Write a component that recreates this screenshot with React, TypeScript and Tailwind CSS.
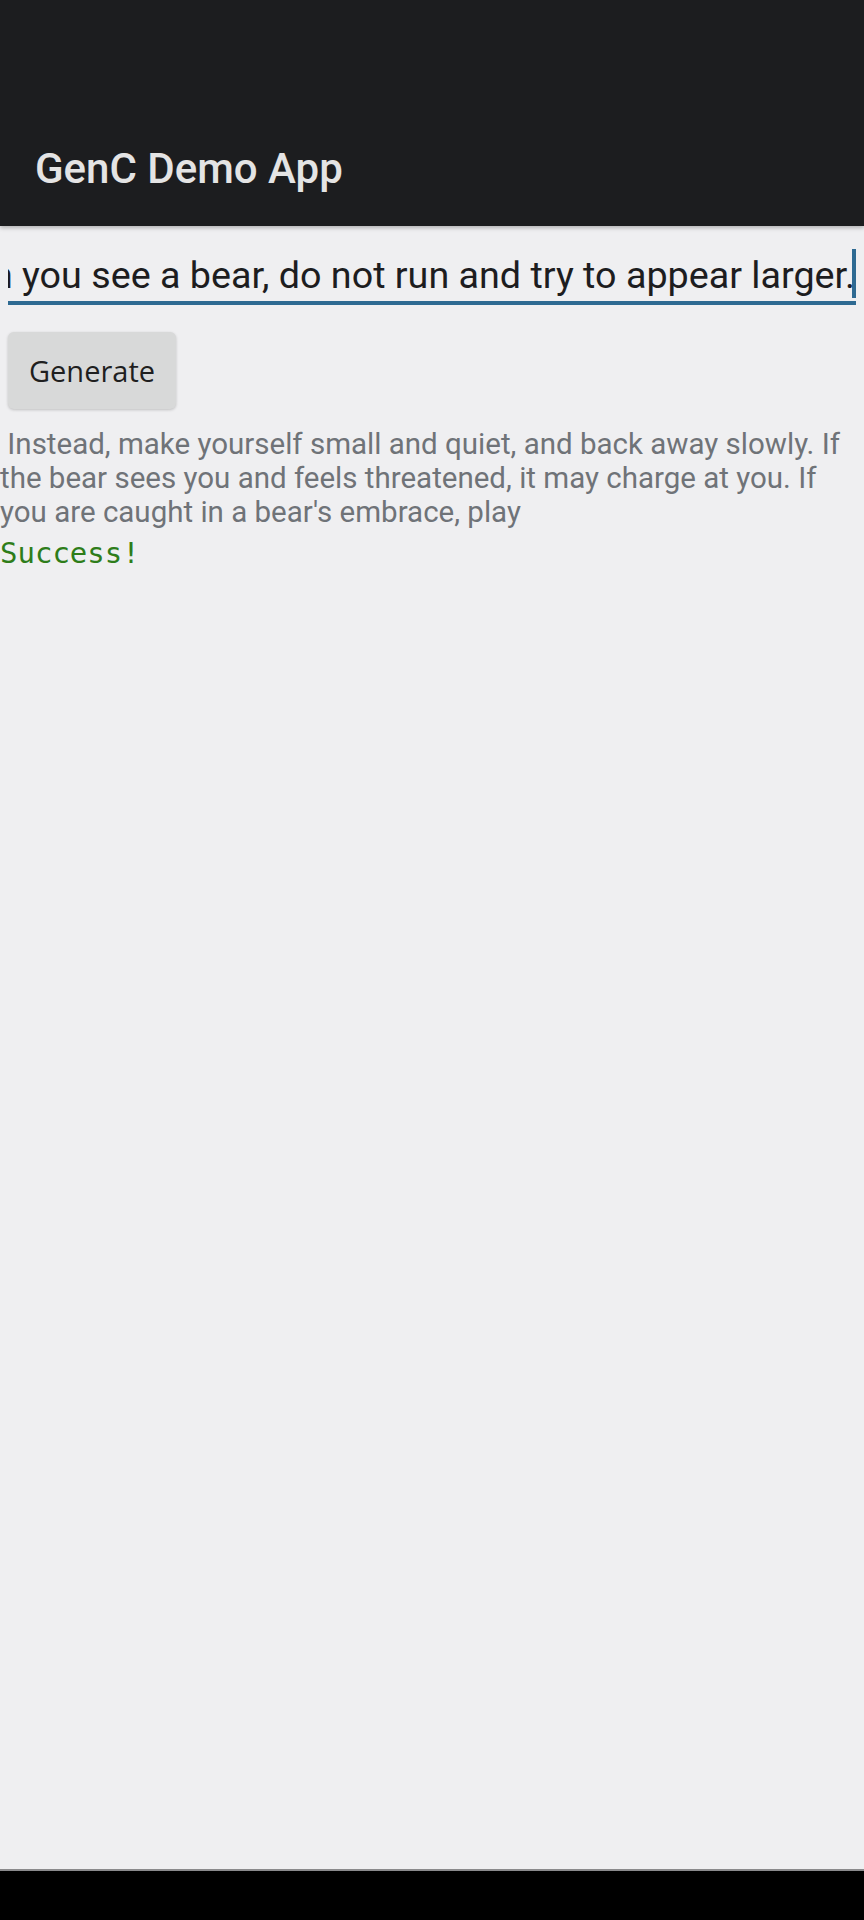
export default function App() {
  const prompt = "When you see a bear, do not run and try to appear larger.";
  const lines = [
    " Instead, make yourself small and quiet, and back away slowly. If",
    "the bear sees you and feels threatened, it may charge at you. If",
    "you are caught in a bear's embrace, play",
  ];

  return (
    <div className="flex h-[1920px] w-[864px] flex-col bg-[#efeff1] font-['Roboto',sans-serif]">
      <header className="flex h-[226px] shrink-0 items-end bg-[#1c1d1f] px-[35px] pb-[32px] shadow-[0_2px_4px_rgba(0,0,0,0.25)]">
        <h1 className="text-[42px] font-medium leading-[50px] text-[#e4e4e4]">GenC Demo App</h1>
      </header>

      <main className="flex flex-1 flex-col">
        <div className="mx-2 mt-[20px] flex h-[59px] items-end overflow-hidden border-b-4 border-[#2e6a92]">
          <div className="flex w-full justify-end whitespace-nowrap">
            <span className="text-[37.7px] leading-[52px] text-[#1d1d1f]">{prompt}</span>
            <span className="mb-[3px] -ml-[3px] w-[4px] shrink-0 self-stretch bg-[#2e6a92]" />
          </div>
        </div>

        <div className="mt-[27px] px-2">
          <button className="h-[77px] w-[168px] rounded-[6px] bg-[#d8d9d9] font-['Open_Sans',sans-serif] text-[29px] text-[#1f1f1f] shadow-[0_1px_3px_rgba(0,0,0,0.2)]">
            Generate
          </button>
        </div>

        <p className="mt-[18px] text-[29.5px] leading-[34px] text-[#6f7378]">
          {lines.map((line) => (
            <span key={line} className="block whitespace-pre">
              {line}
            </span>
          ))}
        </p>
        <p className="mt-[6px] font-['DejaVu_Sans_Mono',monospace] text-[29px] leading-[36px] text-[#2e7d1a]">Success!</p>
      </main>

      <footer className="h-[51px] shrink-0 border-t-2 border-[#8a8a8c] bg-black" />
    </div>
  );
}
